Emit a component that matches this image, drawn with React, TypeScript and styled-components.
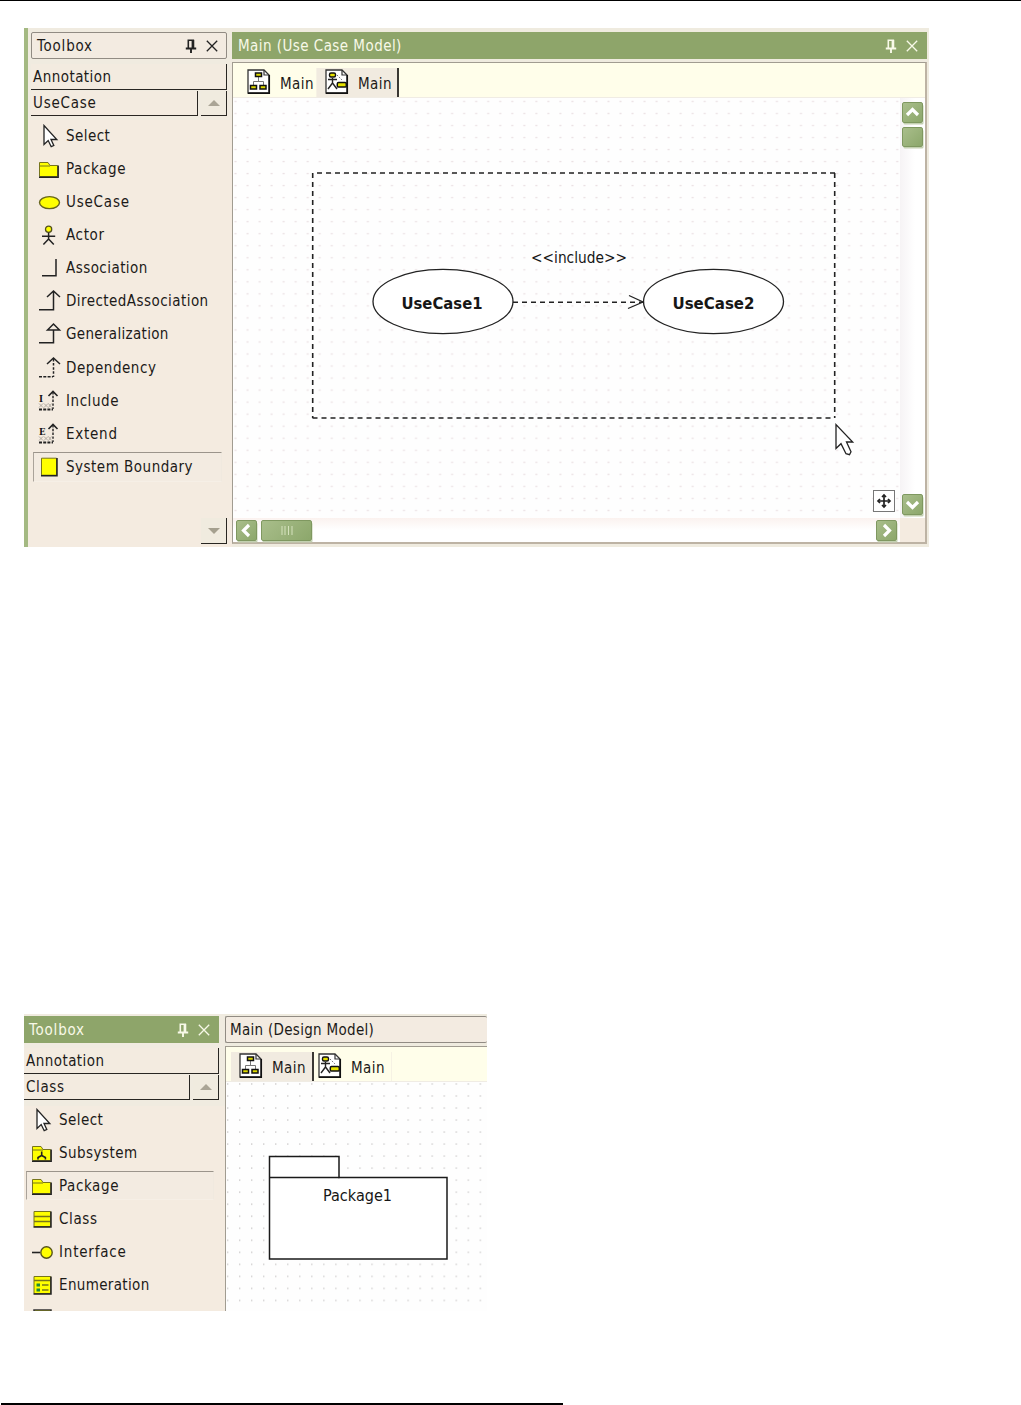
import React from 'react';
import styled, { createGlobalStyle } from 'styled-components';

const GlobalStyle = createGlobalStyle`
  * {
    box-sizing: border-box;
  }

  body {
    margin: 0;
    background: #fff;
    color: #1c1a18;
    font-family: 'DejaVu Sans Condensed', 'DejaVu Sans', sans-serif;
    font-stretch: condensed;
    font-size: 15px;
    letter-spacing: 0.45px;
  }
`;

type IconName =
  | 'select'
  | 'package'
  | 'usecase'
  | 'actor'
  | 'association'
  | 'directed'
  | 'generalization'
  | 'dependency'
  | 'include'
  | 'extend'
  | 'boundary'
  | 'subsystem'
  | 'class'
  | 'interface'
  | 'enumeration'
  | 'more';

interface Tool {
  icon: IconName;
  label: string;
  track?: number;
  selected?: boolean;
}

const useCaseTools: Tool[] = [
  { icon: 'select', label: 'Select' },
  { icon: 'package', label: 'Package', track: 0.6 },
  { icon: 'usecase', label: 'UseCase', track: 0.8 },
  { icon: 'actor', label: 'Actor', track: 0.65 },
  { icon: 'association', label: 'Association' },
  { icon: 'directed', label: 'DirectedAssociation' },
  { icon: 'generalization', label: 'Generalization', track: 0.33 },
  { icon: 'dependency', label: 'Dependency', track: 0.55 },
  { icon: 'include', label: 'Include', track: 0.55 },
  { icon: 'extend', label: 'Extend', track: 0.75 },
  { icon: 'boundary', label: 'System Boundary', track: 0.5, selected: true },
];

const classTools: Tool[] = [
  { icon: 'select', label: 'Select' },
  { icon: 'subsystem', label: 'Subsystem' },
  { icon: 'package', label: 'Package', track: 0.6, selected: true },
  { icon: 'class', label: 'Class', track: 0.6 },
  { icon: 'interface', label: 'Interface', track: 0.8 },
  { icon: 'enumeration', label: 'Enumeration', track: 0.35 },
  { icon: 'more', label: '' },
];

const StereotypeIcon = ({ letter }: { letter: string }) => (
  <>
    <StereotypeLetter x="1" y="12.5">
      {letter}
    </StereotypeLetter>
    <path d="M1 14.500l4 4m0-4l-4 4M6 14.500l4 4m0-4l-4 4M10.500 14.500l3 4m0-4l-3 4" stroke="#aaa49c" strokeWidth=".9" />
    <path d="M1 20.500h14" stroke="#222" strokeWidth="1.8" strokeDasharray="3 1.2" />
    <path d="M15 3v17" stroke="#222" strokeWidth="1.4" strokeDasharray="2.400 1.400" />
    <path d="M10.500 7L15 2.500L19.500 7" stroke="#222" strokeWidth="1.6" />
  </>
);

const toolDrawings: Record<IconName, React.ReactNode> = {
  select: <path d="M6 1.500v19l4.200-4l3 6.200l2.600-1.200l-2.800-6h5.800z" fill="#fff" stroke="#222" strokeWidth="1.3" />,
  package: (
    <>
      <path d="M1.500 19.500V5.500h8.500l2 3h7.500v11z" fill="#ff0" stroke="#77751c" />
      <path d="M2 9h10" stroke="#77751c" />
      <path d="M1 20.200h19.200V8.500" stroke="#222" strokeWidth="1.4" />
    </>
  ),
  usecase: <ellipse cx="11.5" cy="12.6" rx="10" ry="6" fill="#ff0" stroke="#66641c" strokeWidth="1.4" />,
  actor: (
    <>
      <circle cx="10.6" cy="6.2" r="3.1" fill="#ff0" stroke="#55521c" strokeWidth="1.3" />
      <path d="M10.600 9.500v6.500M4 13.200h13.200M10.600 16l-5.200 5.500M10.600 16l5.200 5.500" stroke="#222" strokeWidth="1.5" />
    </>
  ),
  association: <path d="M4 19.800h14V3" stroke="#222" strokeWidth="1.5" />,
  directed: <path d="M1 20.800h14.500V2.500M9 8l6.500-6L22 8" stroke="#222" strokeWidth="1.5" />,
  generalization: <path d="M1 20.800h14.500V8M9.500 8l6-6L21.500 8z" stroke="#222" strokeWidth="1.5" />,
  dependency: (
    <>
      <path d="M1 20.800h14" stroke="#222" strokeWidth="1.6" strokeDasharray="3 1.3" />
      <path d="M15.500 3v18" stroke="#222" strokeWidth="1.5" strokeDasharray="2.500 1.600" />
      <path d="M9 8l6.500-6L22 8" stroke="#222" strokeWidth="1.5" />
    </>
  ),
  include: <StereotypeIcon letter="I" />,
  extend: <StereotypeIcon letter="E" />,
  boundary: (
    <>
      <path d="M3.500 3.200h15v17h-15z" fill="#ff0" stroke="#77751c" />
      <path d="M3 20.800h16V3" stroke="#222" strokeWidth="1.5" />
    </>
  ),
  subsystem: (
    <>
      <path d="M1.500 19.500V5.500h8.500l2 3h7.500v11z" fill="#ff0" stroke="#77751c" />
      <path d="M2 9h10" stroke="#77751c" />
      <path d="M1 20.200h19.200V8.500" stroke="#222" strokeWidth="1.4" />
      <path d="M10.700 10.500v4.500M7 18.500v-2l3.700-2l3.700 2v2" stroke="#222" strokeWidth="1.6" />
    </>
  ),
  class: (
    <>
      <path d="M3 4.500h16.500v15H3z" fill="#ff0" stroke="#77751c" />
      <path d="M3 9.500h16.500M3 14.500h16.500" stroke="#77751c" strokeWidth="1.3" />
      <path d="M2.500 20h17.500V4.500" stroke="#222" strokeWidth="1.5" />
    </>
  ),
  interface: (
    <>
      <path d="M1 12.500h8" stroke="#222" strokeWidth="1.6" />
      <circle cx="15.5" cy="12.5" r="5.7" fill="#ff0" stroke="#55521c" strokeWidth="1.4" />
    </>
  ),
  enumeration: (
    <>
      <path d="M3 3.500h16.500v17H3z" fill="#ff0" stroke="#77751c" />
      <path d="M3 7.500h16.500M11 12h6.500M11 17h6.500" stroke="#77751c" strokeWidth="1.3" />
      <path d="M5.500 12h3.500M5.500 17h3.500" stroke="#1d8a3c" strokeWidth="2.8" />
      <path d="M2.500 21h17.500V3.500" stroke="#222" strokeWidth="1.5" />
    </>
  ),
  more: <path d="M3 4h17v16H3z" fill="#ff0" stroke="#333" strokeWidth="1.5" />,
};

const PinIcon = () => (
  <svg width="12" height="14" viewBox="0 0 12 14" fill="none" stroke="currentColor">
    <path d="M3.300 9V1.200H8.300V9" strokeWidth="1.6" />
    <path d="M7.900 1v8" strokeWidth="2.6" />
    <path d="M.8 9.500h10.400M6 9.500V14" strokeWidth="1.9" />
  </svg>
);

const CloseIcon = () => (
  <svg width="12" height="12" viewBox="0 0 12 12" stroke="currentColor" strokeWidth="1.3">
    <path d="M.8 .8l10.400 10.400M11.200 .8L.8 11.200" />
  </svg>
);

const DocumentShape = () => (
  <>
    <path d="M1 1h16l5 5v18H1z" fill="#fff" stroke="#333" strokeWidth="1.3" />
    <path d="M17 1v5h5" stroke="#333" strokeWidth="1.2" />
    <path d="M22.300 6v18.300H1" stroke="#111" strokeWidth="1.5" />
  </>
);

const ClassDiagramIcon = () => (
  <svg width="24" height="26" viewBox="0 0 24 26" fill="none">
    <DocumentShape />
    <path d="M11.500 7v6M6.500 16v-3.500h10V16" stroke="#777" />
    <path
      d="M8.500 4h6v3.500h-6zM3.500 16.500h6v3.500h-6zM13 16.500h6v3.500h-6z"
      fill="#dcd800"
      stroke="#111"
      strokeWidth="1.5"
    />
  </svg>
);

const UseCaseDiagramIcon = () => (
  <svg width="24" height="26" viewBox="0 0 24 26" fill="none">
    <DocumentShape />
    <path d="M7.500 9v5M3 10.500h9M7.500 14L3 20M7.500 14l4.500 6" stroke="#222" strokeWidth="1.4" />
    <rect x="4.5" y="4" width="6" height="4" rx="1.5" fill="#e6e200" stroke="#111" strokeWidth="1.4" />
    <path d="M12 6l5 5" stroke="#777" strokeDasharray="1.500 1.200" />
    <rect x="12.3" y="13.5" width="9" height="4.6" rx="1.2" fill="#e6e200" stroke="#111" strokeWidth="1.5" />
  </svg>
);

type Direction = 'up' | 'down' | 'left' | 'right';

const chevrons: Record<Direction, string> = {
  up: 'M5 13l5.500-5.500L16 13',
  down: 'M5 8l5.500 5.500L16 8',
  left: 'M13 5L7.500 10.500L13 16',
  right: 'M8 5l5.500 5.500L8 16',
};

const ScrollButton = ({ direction }: { direction: Direction }) => (
  <ScrollPiece $w={21} $h={21}>
    <svg width="19" height="19" viewBox="1 1 19 19" fill="none" stroke="#fff" strokeWidth="3.2">
      <path d={chevrons[direction]} />
    </svg>
  </ScrollPiece>
);

interface ToolboxProps {
  category: string;
  categoryTrack?: number;
  tools: Tool[];
  active?: boolean;
}

const Toolbox: React.FC<ToolboxProps> = ({ category, categoryTrack, tools, active = false }) => (
  <ToolboxPanel $flush={active}>
    <TitleBar $active={active} $inset={active ? 4 : 5}>
      <Label $track={0.8}>Toolbox</Label>
      <TitleActions $active={active}>
        <PinIcon />
        <CloseIcon />
      </TitleActions>
    </TitleBar>
    <CategoryButton>Annotation</CategoryButton>
    <CategoryRow>
      <CategoryButton>
        <Label $track={categoryTrack}>{category}</Label>
      </CategoryButton>
      <ArrowButton>
        <svg width="12" height="6" viewBox="0 0 12 6">
          <path d="M0 6L6 0l6 6z" fill="#aaa596" />
        </svg>
      </ArrowButton>
    </CategoryRow>
    <ToolList>
      {tools.map((tool) => (
        <ToolRow key={tool.icon} $selected={tool.selected}>
          <svg width="24" height="24" viewBox="0 0 24 24" fill="none">
            {toolDrawings[tool.icon]}
          </svg>
          <Label $track={tool.track}>{tool.label}</Label>
        </ToolRow>
      ))}
    </ToolList>
    {!active && (
      <ArrowButton $end>
        <svg width="12" height="6" viewBox="0 0 12 6">
          <path d="M0 0l6 6l6-6z" fill="#a5a08f" />
        </svg>
      </ArrowButton>
    )}
  </ToolboxPanel>
);

interface TabsProps {
  current: number;
  indent: number;
}

const DiagramTabs: React.FC<TabsProps> = ({ current, indent }) => (
  <TabStrip $indent={indent}>
    <Tab $current={current === 0} $width={current === 0 ? 83 : 78}>
      <ClassDiagramIcon />
      <span>Main</span>
    </Tab>
    <Tab $current={current === 1} $width={82} $overlap={current === 0}>
      <UseCaseDiagramIcon />
      <span>Main</span>
    </Tab>
  </TabStrip>
);

const UseCaseDiagram = () => (
  <svg width="667" height="420" viewBox="233 98 667 420" fill="none" stroke="#222">
    <defs>
      <pattern id="pinkDots" x="1" y="0" width="12.03" height="12.03" patternUnits="userSpaceOnUse">
        <rect x="5" y="4.5" width="2" height="1.3" fill="#eadfe2" stroke="none" />
      </pattern>
    </defs>
    <rect x="233" y="98" width="667" height="420" fill="url(#pinkDots)" stroke="none" />
    <path d="M317 173h518M312.500 418h522" strokeWidth="1.5" strokeDasharray="5 4" />
    <path d="M312.700 173v245M834.700 173v245" strokeWidth="1.6" strokeDasharray="5 4" />
    <ellipse cx="443" cy="301.5" rx="70" ry="32.2" fill="#fff" strokeWidth="1.3" />
    <ellipse cx="713.5" cy="301.5" rx="70" ry="32.2" fill="#fff" strokeWidth="1.3" />
    <path d="M513 302.300h130" strokeWidth="1.5" strokeDasharray="5 4" />
    <path d="M629 295.500l14 6.500l-15 6.500" strokeWidth="1.3" />
    <DiagramText x="531" y="263" textLength="96" lengthAdjust="spacingAndGlyphs">
      &lt;&lt;include&gt;&gt;
    </DiagramText>
    <DiagramText x="401.5" y="308.5" textLength="81" lengthAdjust="spacingAndGlyphs" $bold>
      UseCase1
    </DiagramText>
    <DiagramText x="672.5" y="308.5" textLength="82" lengthAdjust="spacingAndGlyphs" $bold>
      UseCase2
    </DiagramText>
    <path d="M836 424.500v24l5-4.800l5 10l3.500 1l1.500-3l-4.500-9.700h6.200z" fill="#fff" strokeWidth="1.3" />
  </svg>
);

const DesignDiagram = () => (
  <svg width="261" height="229" viewBox="226 1082 261 229" fill="none" stroke="#1a1a1a">
    <defs>
      <pattern id="grayDots" x="227" y="1083" width="12.03" height="12.03" patternUnits="userSpaceOnUse">
        <rect x="0" y=".3" width="1.3" height="1.3" fill="#c9c6c6" stroke="none" />
      </pattern>
    </defs>
    <rect x="226" y="1082" width="261" height="229" fill="url(#grayDots)" stroke="none" />
    <path d="M269.500 1156.500h69.500v21h108v81.500h-177.500z" fill="#fff" strokeWidth="1.5" />
    <path d="M269.500 1177.500h70" strokeWidth="1.5" />
    <DiagramText x="323" y="1201" textLength="69" lengthAdjust="spacingAndGlyphs">
      Package1
    </DiagramText>
  </svg>
);

const App: React.FC = () => {
  return (
    <Page>
      <GlobalStyle />
      <Rule $thickness={1} />
      <UseCaseWindow>
        <Toolbox category="UseCase" categoryTrack={0.75} tools={useCaseTools} />
        <Editor>
          <TitleBar $active $inset={5}>
            <Label>Main (Use Case Model)</Label>
            <TitleActions $active>
              <PinIcon />
              <CloseIcon />
            </TitleActions>
          </TitleBar>
          <EditorFrame>
            <DiagramTabs current={1} indent={6} />
            <CanvasGrid>
              <Canvas>
                <UseCaseDiagram />
                <PanButton>
                  <svg width="16" height="16" viewBox="0 0 16 16" fill="none" stroke="#222" strokeWidth="1.7">
                    <path d="M8 2v12M2 8h12" />
                    <path d="M6 4L8 2L10 4M6 12L8 14L10 12M4 6L2 8L4 10M12 6L14 8L12 10" />
                  </svg>
                </PanButton>
              </Canvas>
              <VerticalScroll>
                <ScrollButton direction="up" />
                <ScrollPiece $w={21} $h={20} />
                <Spacer />
                <ScrollButton direction="down" />
              </VerticalScroll>
              <HorizontalScroll>
                <ScrollButton direction="left" />
                <ScrollPiece $w={51} $h={21}>
                  <svg width="12" height="9" viewBox="0 0 12 9" stroke="#d5e2bd">
                    <path d="M1 0v9M4 0v9M7.500 0v9M11 0v9" />
                  </svg>
                </ScrollPiece>
                <Spacer />
                <ScrollButton direction="right" />
              </HorizontalScroll>
            </CanvasGrid>
          </EditorFrame>
        </Editor>
      </UseCaseWindow>
      <DesignWindow>
        <Toolbox category="Class" categoryTrack={0.6} tools={classTools} active />
        <Editor $cropped>
          <TitleBar $inset={4} $openEnd>
            <Label $track={0.3}>Main (Design Model)</Label>
          </TitleBar>
          <EditorFrame $cropped>
            <DiagramTabs current={0} indent={5} />
            <Canvas>
              <DesignDiagram />
            </Canvas>
          </EditorFrame>
        </Editor>
      </DesignWindow>
      <Rule $thickness={2} $short />
    </Page>
  );
};

const Page = styled.main`
  width: 1021px;
  height: 1405px;
  overflow: hidden;
  background: #fff;
`;

const Rule = styled.div<{ $thickness: number; $short?: boolean }>`
  width: ${(props) => (props.$short ? '562px' : '100%')};
  height: ${(props) => props.$thickness}px;
  margin-left: ${(props) => (props.$short ? 1 : 0)}px;
  background: #000;
`;

const UseCaseWindow = styled.section`
  display: grid;
  grid-template-columns: 204px 697px;
  width: 905px;
  height: 519px;
  margin: 27px 0 467px 24px;
  border-left: 4px solid #a4b982;
  background: #f4ebe0;
  overflow: hidden;
`;

const DesignWindow = styled.section`
  display: grid;
  grid-template-columns: 201px 262px;
  width: 463px;
  height: 297px;
  margin: 0 0 92px 24px;
  background: #f4ebe0;
  overflow: hidden;
`;

const ToolboxPanel = styled.aside<{ $flush: boolean }>`
  display: flex;
  flex-direction: column;
  min-height: 0;
  padding: ${(props) => (props.$flush ? '2px 6px 0 0' : '4px 5px 3px 3px')};
  background: linear-gradient(#f0ebe0, #f0ebe0) top / 100% 92px no-repeat, #f4ebe0;
  overflow: hidden;
`;

const TitleBar = styled.header<{ $active?: boolean; $inset: number; $openEnd?: boolean }>`
  display: flex;
  flex-shrink: 0;
  align-items: center;
  justify-content: space-between;
  height: 27px;
  padding: 0 8px 0 ${(props) => props.$inset}px;
  border: 1px solid ${(props) => (props.$active ? '#8ea56a' : '#918b83')};
  border-radius: ${(props) => (props.$active ? 0 : 2)}px;
  border-right-width: ${(props) => (props.$openEnd ? 0 : 1)}px;
  background: ${(props) => (props.$active ? '#8ea56a' : '#f3ebe1')};
  color: ${(props) => (props.$active ? '#f8f9e8' : '#1c1a18')};
`;

const TitleActions = styled.div<{ $active?: boolean }>`
  display: flex;
  align-items: center;
  gap: 9px;
  color: ${(props) => (props.$active ? '#f8f9e8' : '#222')};
`;

const Label = styled.span<{ $track?: number }>`
  letter-spacing: ${(props) => props.$track ?? 0.45}px;
  white-space: nowrap;
`;

const CategoryButton = styled.button`
  flex: 1 0 auto;
  height: 26px;
  max-height: 26px;
  margin-top: 5px;
  padding: 0 0 0 2px;
  border: 0;
  border-right: 1.5px solid #282622;
  border-bottom: 1.5px solid #282622;
  background: #f3ebe0;
  color: inherit;
  font: inherit;
  letter-spacing: inherit;
  text-align: left;
`;

const CategoryRow = styled.div`
  display: flex;
  flex-shrink: 0;
  gap: 3px;
  height: 25px;
  margin-top: 1px;

  ${CategoryButton} {
    height: 25px;
    margin-top: 0;
  }
`;

const ArrowButton = styled.button<{ $end?: boolean }>`
  display: flex;
  flex-shrink: 0;
  align-items: center;
  align-self: ${(props) => (props.$end ? 'flex-end' : 'auto')};
  justify-content: center;
  width: 26px;
  height: 26px;
  margin-top: ${(props) => (props.$end ? 'auto' : 0)};
  padding: 0;
  border: 0;
  border-right: 1.5px solid #282622;
  border-bottom: 1.5px solid #282622;
  background: #f0ebdf;

  ${CategoryRow} & {
    height: 25px;
  }
`;

const ToolList = styled.div`
  margin: 5px 5px 0 2px;
`;

const ToolRow = styled.div<{ $selected?: boolean }>`
  display: flex;
  align-items: center;
  gap: 4px;
  height: 29.15px;
  margin: 0 0 4px;
  padding-left: 4px;
  border: 1px solid transparent;
  ${(props) =>
    props.$selected &&
    `
    border-color: #9b948b #f0e9df #f6efe6 #aaa39a;
    background: #f3ebe1;
  `}
`;

const StereotypeLetter = styled.text`
  fill: #111;
  font-family: 'DejaVu Serif', serif;
  font-size: 9.5px;
  font-weight: bold;
`;

const Editor = styled.div<{ $cropped?: boolean }>`
  display: flex;
  flex-direction: column;
  min-width: 0;
  padding: ${(props) => (props.$cropped ? '2px 0 0' : '4px 2px 3px 0')};
  background: #efebdf;
`;

const EditorFrame = styled.div<{ $cropped?: boolean }>`
  display: flex;
  flex: 1;
  flex-direction: column;
  min-height: 0;
  margin-top: 3px;
  border: 1px solid #a19c91;
  border-right: ${(props) => (props.$cropped ? '0' : '2px solid #bdb3a4')};
  border-bottom: ${(props) => (props.$cropped ? '0' : '2px solid #bdb3a4')};
  background: #fff;
`;

const TabStrip = styled.nav<{ $indent: number }>`
  display: flex;
  flex-shrink: 0;
  align-items: flex-end;
  height: 35px;
  padding-left: ${(props) => props.$indent}px;
  border-bottom: 1px solid #f0ece4;
  background: #fffeea;
`;

const Tab = styled.div<{ $current: boolean; $width: number; $overlap?: boolean }>`
  display: flex;
  align-items: center;
  gap: 9px;
  width: ${(props) => props.$width}px;
  height: 29px;
  margin-left: ${(props) => (props.$overlap ? -4 : 0)}px;
  padding: 0 0 2px 8px;
  border-right: ${(props) => (props.$current ? '2px solid #3a3834' : '1px solid #f6f2e4')};
  background: ${(props) => (props.$current ? '#f1ebe0' : 'transparent')};

  svg {
    flex-shrink: 0;
  }

  span {
    padding-top: 5px;
  }
`;

const CanvasGrid = styled.div`
  display: grid;
  flex: 1;
  grid-template-columns: 667px 25px;
  grid-template-rows: 420px 24px;
  background: #f4ebe0;
`;

const Canvas = styled.div`
  position: relative;
  background: #fefefe;

  > svg {
    display: block;
  }
`;

const DiagramText = styled.text<{ $bold?: boolean }>`
  fill: #161616;
  stroke: none;
  font-size: 15px;
  font-weight: ${(props) => (props.$bold ? 'bold' : 'normal')};
  letter-spacing: 0;
`;

const PanButton = styled.button`
  position: absolute;
  right: 5px;
  bottom: 6px;
  display: flex;
  align-items: center;
  justify-content: center;
  width: 22px;
  height: 22px;
  padding: 0;
  border: 1px solid #777;
  background: #fff;
`;

const VerticalScroll = styled.div`
  display: flex;
  flex-direction: column;
  gap: 4px;
  align-items: center;
  padding: 4px 0 3px;
  background: linear-gradient(to right, #f6f3f5, #fff 60%);
`;

const HorizontalScroll = styled.div`
  display: flex;
  gap: 4px;
  align-items: center;
  padding: 0 3px;
  background: linear-gradient(#fbf2ef, #fff 50%);
`;

const ScrollPiece = styled.div<{ $w: number; $h: number }>`
  display: flex;
  flex-shrink: 0;
  align-items: center;
  justify-content: center;
  width: ${(props) => props.$w}px;
  height: ${(props) => props.$h}px;
  border: 1px solid #7f9860;
  border-radius: 2px;
  background: linear-gradient(135deg, #a9be8b, #8ca76b);
  box-shadow: 1px 2px 0 -0.5px #c3d0b0;
`;

const Spacer = styled.div`
  flex: 1;
`;

export default App;
